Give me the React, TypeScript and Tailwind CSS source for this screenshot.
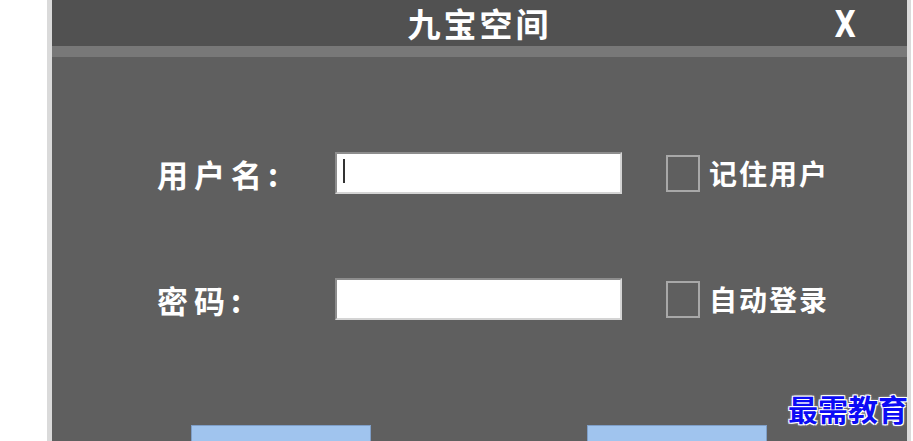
import React from 'react';

const cjk = "font-['Noto_Sans_CJK_SC','Noto_Sans',sans-serif]";

const App: React.FC = () => {
  return (
    <div className={`relative flex h-[441px] w-[913px] overflow-hidden bg-white ${cjk}`}>
      {/* left margin */}
      <div className="w-[47px] shrink-0 bg-white"></div>
      <div className="w-[5px] shrink-0 bg-[#dadada]"></div>

      {/* login window */}
      <div className="flex w-[855px] shrink-0 flex-col">
        <div className="relative flex h-[46px] shrink-0 items-center justify-center bg-[#515151]">
          <span className="text-[33px] font-semibold leading-[40px] tracking-[3px] text-white">九宝空间</span>
          <span className="absolute right-[47px] top-[6px] origin-center scale-x-[0.75] font-['DejaVu_Sans',sans-serif] text-[37px] font-bold leading-none text-white">
            X
          </span>
        </div>
        <div className="h-[11px] shrink-0 bg-[#787878]"></div>

        <div className="flex flex-1 flex-col overflow-hidden bg-[#5f5f5f] pl-[105px] pt-[95px]">
          {/* username row */}
          <div className="flex h-[42px] items-center">
            <span className="w-[178px] text-[31px] font-bold leading-none tracking-[6px] text-white">用户名:</span>
            <div className="relative h-[42px] w-[287px] border-2 border-t-[#8d8d8d] border-l-[#8d8d8d] border-b-[#d4d4d4] border-r-[#d4d4d4] bg-white">
              <div className="absolute left-[6px] top-[5px] h-[24px] w-[2px] bg-[#333]"></div>
            </div>
            <div className="ml-[44px] h-[37px] w-[34px] border-2 border-[#a8a8a8]"></div>
            <span className="ml-[9px] text-[28px] font-bold leading-none tracking-[2px] text-white">记住用户</span>
          </div>

          {/* password row */}
          <div className="mt-[84px] flex h-[42px] items-center">
            <span className="w-[178px] text-[31px] font-bold leading-none tracking-[6px] text-white">密码:</span>
            <div className="h-[42px] w-[287px] border-2 border-t-[#8d8d8d] border-l-[#8d8d8d] border-b-[#d4d4d4] border-r-[#d4d4d4] bg-white"></div>
            <div className="ml-[44px] h-[37px] w-[34px] border-2 border-[#a8a8a8]"></div>
            <span className="ml-[9px] text-[28px] font-bold leading-none tracking-[2px] text-white">自动登录</span>
          </div>

          {/* buttons */}
          <div className="mt-[105px] flex pl-[34px]">
            <div className="h-[40px] w-[180px] border border-[#7f9fc8] bg-[#a0c4ee]"></div>
            <div className="ml-[216px] h-[40px] w-[180px] border border-[#7f9fc8] bg-[#a0c4ee]"></div>
          </div>
        </div>
      </div>

      <div className="w-[4px] shrink-0 bg-[#dadada]"></div>
      <div className="flex-1 bg-white"></div>

      {/* watermark */}
      <span className="absolute left-[788px] top-[393px] text-[30px] font-bold leading-none text-[#0b0bf5] [text-shadow:_-1px_-1px_0_#fff,1px_-1px_0_#fff,-1px_1px_0_#fff,1px_1px_0_#fff,0_0_3px_#fff]">
        最需教育
      </span>
    </div>
  );
};

export default App;
